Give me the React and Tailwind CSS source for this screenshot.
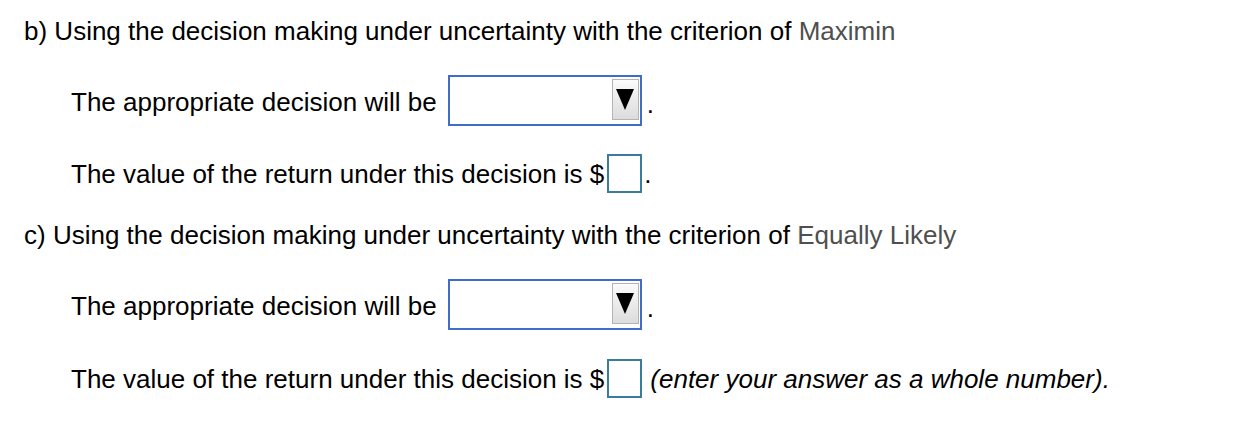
import React from "react";

const Select = () => (
  <div className="relative ml-[11px] h-[51px] w-[194px] border-2 border-[#3f6dc7] bg-white">
    <div className="absolute right-[1px] top-[2px] flex h-[41px] w-[27px] items-center justify-center border border-[#b4b4b4] bg-gradient-to-b from-[#fbfbfb] to-[#dcdcdc]">
      <svg width="18" height="21" viewBox="0 0 18 21">
        <polygon points="0,0 18,0 9,21" fill="#000" />
      </svg>
    </div>
  </div>
);

const NumInput = () => (
  <div className="ml-[3px] h-[39px] w-[35px] border-2 border-[#3a7ba0] bg-white" />
);

const Heading = ({ label, criterion }) => (
  <p className="h-[30px] pl-[24px] leading-[30px]">
    {label} Using the decision making under uncertainty with the criterion of{" "}
    <span className="text-[#4f4f4f]">{criterion}</span>
  </p>
);

const DecisionRow = ({ className }) => (
  <div className={"flex items-center pl-[71px] " + className}>
    <span className="pt-[2px] leading-[30px]">The appropriate decision will be</span>
    <Select />
    <span className="ml-[5px] pt-[6px] leading-[30px]">.</span>
  </div>
);

const ValueRow = ({ className, note }) => (
  <div className={"flex items-center pl-[71px] " + className}>
    <span className="leading-[30px]">The value of the return under this decision is $</span>
    <NumInput />
    {note ? (
      <span className="ml-[8px] italic leading-[30px]">(enter your answer as a whole number).</span>
    ) : (
      <span className="ml-[2px] leading-[30px]">.</span>
    )}
  </div>
);

export default function App() {
  return (
    <div
      className="h-[434px] w-[1256px] bg-white pt-[16px] text-[26px] text-black"
      style={{ fontFamily: '"Liberation Sans", Arial, sans-serif' }}
    >
      <Heading label="b)" criterion="Maximin" />
      <DecisionRow className="mt-[29px]" />
      <ValueRow className="mt-[28px]" />
      <div className="mt-[27px]">
        <Heading label="c)" criterion="Equally Likely" />
      </div>
      <DecisionRow className="mt-[29px]" />
      <ValueRow className="mt-[29px]" note />
    </div>
  );
}
